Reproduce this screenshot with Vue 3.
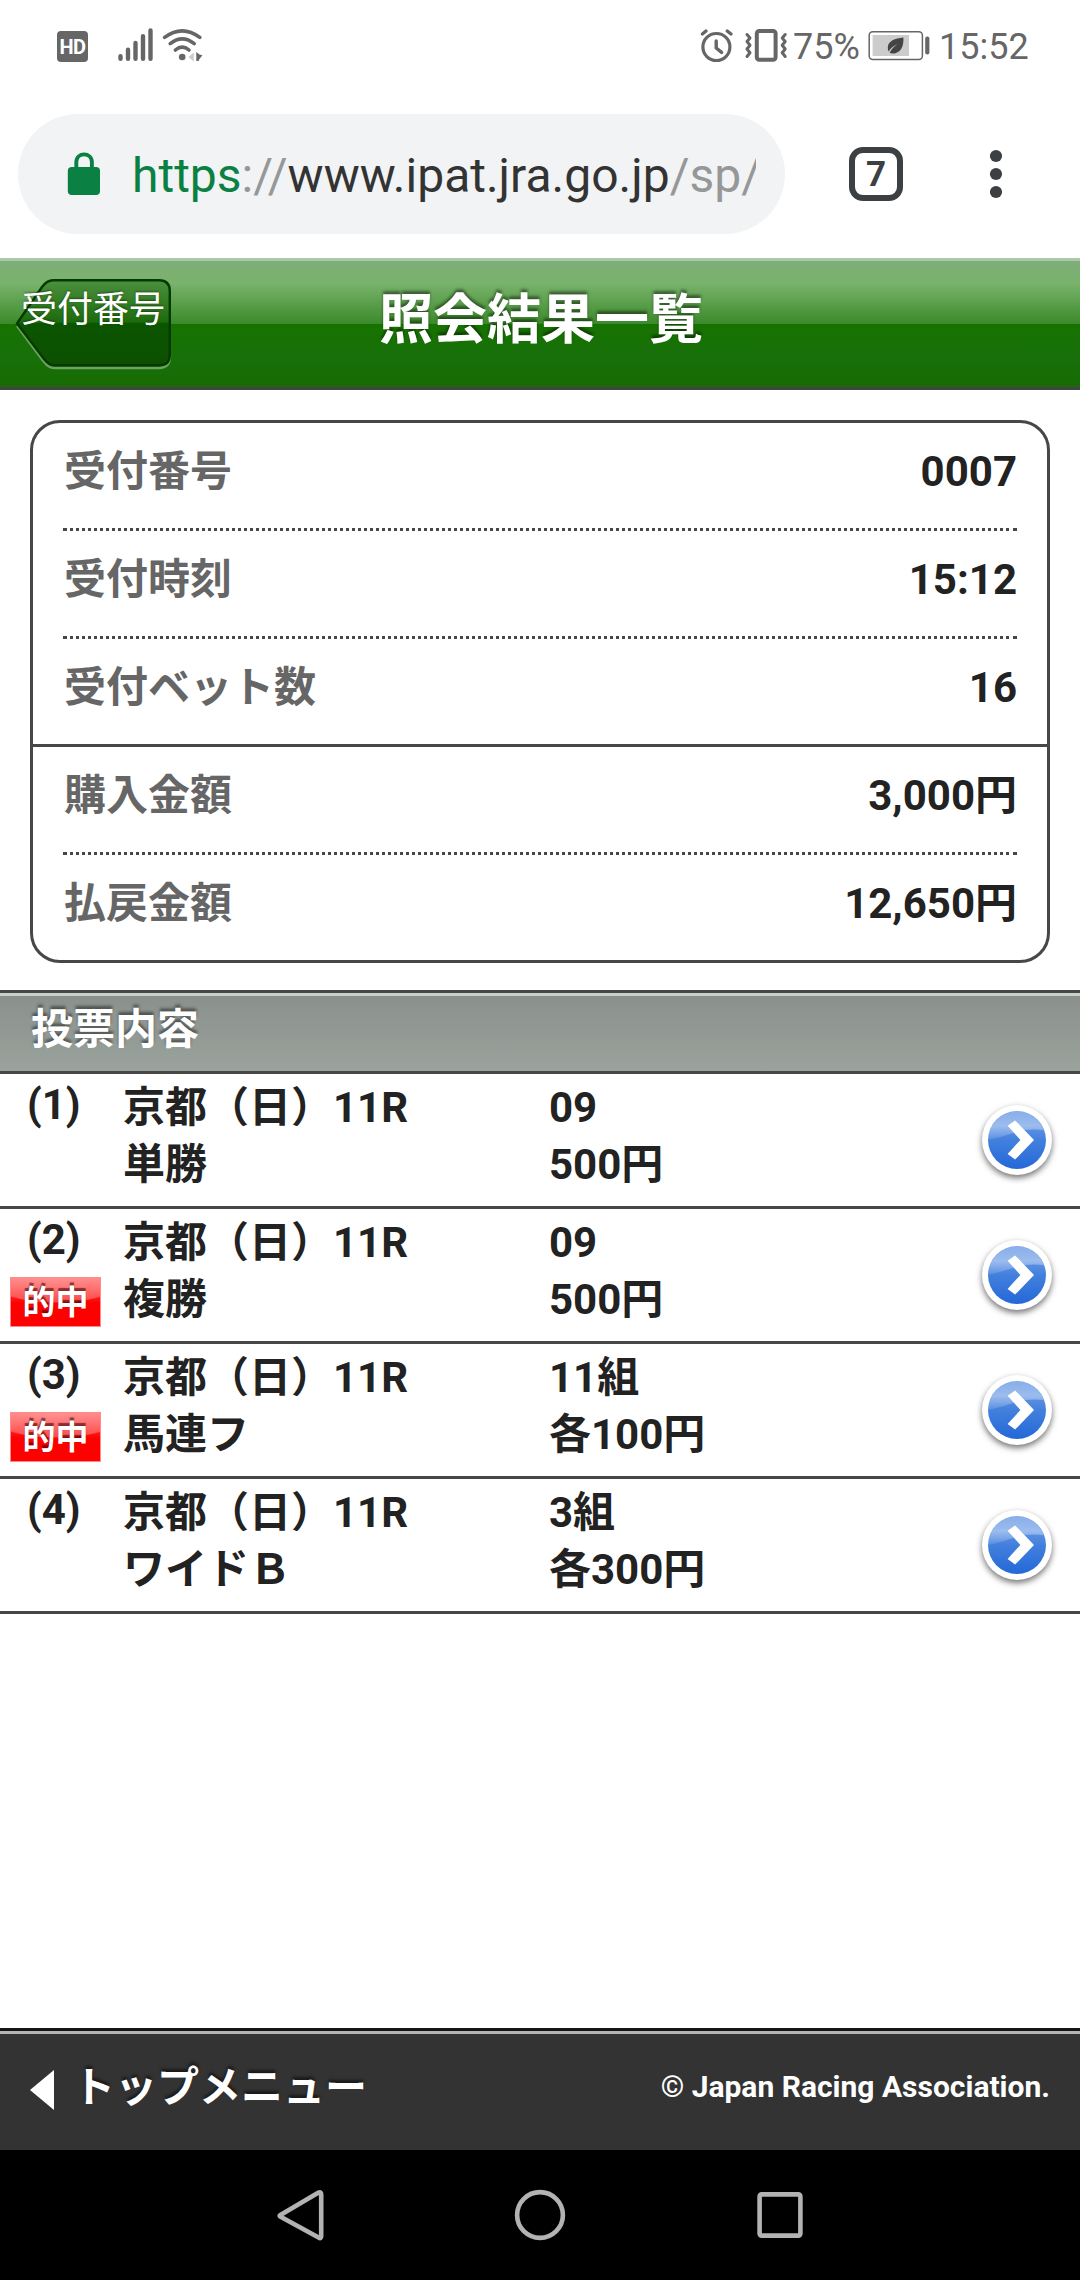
<script setup>
const summary = [
  { label: '受付番号', value: '0007', rule: 'dotted' },
  { label: '受付時刻', value: '15:12', rule: 'dotted' },
  { label: '受付ベット数', value: '16', rule: 'solid' },
  { label: '購入金額', value: '3,000円', rule: 'dotted' },
  { label: '払戻金額', value: '12,650円', rule: 'none' },
]

const bets = [
  { no: '(1)', race: '京都（日）11R', type: '単勝', pick: '09', stake: '500円', hit: false },
  { no: '(2)', race: '京都（日）11R', type: '複勝', pick: '09', stake: '500円', hit: true },
  { no: '(3)', race: '京都（日）11R', type: '馬連フ', pick: '11組', stake: '各100円', hit: true },
  { no: '(4)', race: '京都（日）11R', type: 'ワイドＢ', pick: '3組', stake: '各300円', hit: false },
]
</script>

<template>
  <div class="screen">
    <div class="status">
      <span class="hd">HD</span>
      <svg class="net" width="90" height="40" viewBox="116 26 90 40">
        <g stroke="#666" stroke-width="4.4" stroke-linecap="round" fill="none">
          <path d="M120.5 56.3V58.8M128 49.8V58.8M135.5 43V58.8M143 36.2V58.8M150.5 30.4V58.8" />
        </g>
        <g stroke="#666" stroke-width="3.6" stroke-linecap="round" fill="none">
          <path d="M164.6 37.4Q182.2 24.2 199.8 37.4" />
          <path d="M170.2 43.6Q182.2 34.2 194.2 43.6" />
          <path d="M175.4 50Q182.2 44.2 189 50" />
        </g>
        <circle cx="182.2" cy="57" r="3.3" fill="#666" />
        <path d="M193.8 52.5V61.5L188.4 57Z" fill="#ccc" />
        <path d="M196.3 52L199.4 54.4L202.4 55.2L199.3 59.2L198.6 61H196.3Z" fill="#666" />
      </svg>
      <svg class="alarm" width="90" height="40" viewBox="700 26 90 40">
        <g fill="none" stroke="#666" stroke-linecap="round" stroke-linejoin="round">
          <circle cx="716.4" cy="47" r="13.5" stroke-width="3.2" />
          <path d="M716.2 41V48L721.6 52.4" stroke-width="3.4" />
          <path d="M702.4 34L706 31M727.2 31L731 34" stroke-width="3.4" />
          <rect x="756.8" y="31" width="18.8" height="28.8" rx="2.5" stroke-width="4" />
          <path d="M747 34.5L750 38L747 41.5L750 45.3L747 49L750 52.7L747 56.5" stroke-width="3" />
          <path d="M785.2 34.5L782.2 38L785.2 41.5L782.2 45.3L785.2 49L782.2 52.7L785.2 56.5" stroke-width="3" />
        </g>
      </svg>
      <span class="pct">75%</span>
      <svg class="battery" width="64" height="32" viewBox="867 30 64 32">
        <rect x="869.2" y="31.8" width="53.2" height="27.8" rx="3.5" fill="none" stroke="#666" stroke-width="1.5" />
        <rect x="872.6" y="35" width="36.4" height="21" fill="#ccc" />
        <rect x="925.2" y="36.6" width="4.2" height="18" rx="2" fill="#666" />
        <path d="M903.4 37.6C895 38.4 888 41 887.8 47.6Q887.8 50 888.6 51.4Q892 46 897.6 44.2Q892 47.6 889.6 52.8Q892 53.8 895.4 53.2C901.4 51.6 903.8 46 903.4 37.6Z" fill="#444" />
      </svg>
      <span class="clock">15:52</span>
    </div>

    <div class="browser">
      <div class="omnibox">
        <svg class="lock" width="34" height="44" viewBox="67 151 34 44">
          <path d="M76.3 168V161.3C76.3 150.7 91.9 150.7 91.9 161.3V168" fill="none" stroke="#0b8043" stroke-width="3.9" />
          <rect x="67.8" y="166" width="32.2" height="28" rx="4" fill="#0b8043" />
        </svg>
        <div class="url"><span class="scheme">https</span><span class="dim">://</span>www.ipat.jra.go.jp<span class="dim">/sp/</span></div>
      </div>
      <div class="tabs">7</div>
      <svg class="more" width="14" height="50" viewBox="0 0 14 50">
        <g fill="#3c4043"><circle cx="7" cy="7" r="6.1" /><circle cx="7" cy="25" r="6.1" /><circle cx="7" cy="43" r="6.1" /></g>
      </svg>
    </div>

    <header class="bar">
      <div class="back">
        <svg class="back-shape" width="160" height="94" viewBox="14 277 160 94">
          <defs>
            <linearGradient id="backFill" x1="0" y1="0" x2="0" y2="1">
              <stop offset="0" stop-color="#4c903f" />
              <stop offset="0.49" stop-color="#1d6b0c" />
              <stop offset="0.51" stop-color="#0b5500" />
              <stop offset="1" stop-color="#0d4f02" />
            </linearGradient>
          </defs>
          <path d="M17 326L44 362Q49 368 54 368H159Q170 368 170 356" fill="none" stroke="#6aa45f" stroke-width="2.4" />
          <path d="M17 323.5L42 287Q47 280.3 53 280.3H159Q169.8 280.3 169.8 291V355Q169.8 365.3 159 365.3H54Q49 365.3 44 359Z" fill="url(#backFill)" stroke="#053a00" stroke-width="2.4" />
        </svg>
        <span class="back-text">受付番号</span>
      </div>
      <h1 class="title">照会結果一覧</h1>
    </header>

    <section class="summary">
      <div v-for="s in summary" :key="s.label" class="srow" :class="s.rule">
        <span class="slabel">{{ s.label }}</span>
        <span class="svalue">{{ s.value }}</span>
      </div>
    </section>

    <h2 class="section">投票内容</h2>

    <ul class="bets">
      <li v-for="b in bets" :key="b.no" class="bet">
        <div class="no">
          <span class="num">{{ b.no }}</span>
          <span v-if="b.hit" class="hit">的中</span>
        </div>
        <div class="col race"><span>{{ b.race }}</span><span>{{ b.type }}</span></div>
        <div class="col stake"><span>{{ b.pick }}</span><span>{{ b.stake }}</span></div>
        <svg class="go" width="90" height="90" viewBox="-45 -45 90 90">
          <defs>
            <linearGradient id="goFill" x1="0" y1="0" x2="0" y2="1">
              <stop offset="0" stop-color="#7fa8e8" />
              <stop offset="0.5" stop-color="#4380dd" />
              <stop offset="1" stop-color="#2468d8" />
            </linearGradient>
            <linearGradient id="goGloss" x1="0" y1="0" x2="0" y2="1">
              <stop offset="0" stop-color="#fff" stop-opacity="0.1" />
              <stop offset="0.5" stop-color="#fff" stop-opacity="0.38" />
              <stop offset="1" stop-color="#fff" stop-opacity="0.1" />
            </linearGradient>
          </defs>
          <circle class="disc" r="35" fill="#fff" />
          <circle r="29" fill="url(#goFill)" />
          <path d="M-29 0A29 29 0 0 1 27 -10Q8 -12 -7 -6Q-20 -2 -29 0Z" fill="url(#goGloss)" />
          <path d="M-9.4 -14.3L-1.9 -19.6L17 0L-1.9 19.6L-9.4 14L3.4 0Z" fill="#fff" />
        </svg>
      </li>
    </ul>

    <footer class="foot">
      <svg class="tri" width="26" height="42" viewBox="0 0 26 42"><path d="M1 21L25 1V41Z" fill="#fff" /></svg>
      <span class="top">トップメニュー</span>
      <span class="copy">© Japan Racing Association.</span>
    </footer>

    <nav class="nav">
      <svg width="52" height="54" viewBox="0 0 52 54"><path d="M6 27.2L44.6 4.6Q47.2 3.4 47.2 6.6V48Q47.2 51.2 44.6 49.6L6.6 28.8Q5 27.8 6 27.2Z" fill="none" stroke="#b3b3b3" stroke-width="4.6" stroke-linejoin="round" /></svg>
      <svg width="52" height="54" viewBox="0 0 52 54"><circle cx="26" cy="27" r="22.9" fill="none" stroke="#b3b3b3" stroke-width="4.6" /></svg>
      <svg width="52" height="54" viewBox="0 0 52 54"><rect x="5.6" y="6.4" width="40.8" height="41.2" rx="2" fill="none" stroke="#b3b3b3" stroke-width="4.6" /></svg>
    </nav>
  </div>
</template>

<style>
body {
  margin: 0;
  background: #fff;
}
</style>

<style scoped>
.screen {
  width: 1080px;
  height: 2280px;
  display: flex;
  flex-direction: column;
  overflow: hidden;
  background: #fff;
  color: #222;
  font-family: Roboto, "Noto Sans CJK JP", sans-serif;
}
.screen * {
  box-sizing: border-box;
}
.screen svg {
  display: block;
  flex: none;
}

.status {
  height: 92px;
  display: flex;
  align-items: center;
  padding-left: 57px;
  color: #666;
  font-size: 36px;
  line-height: 42px;
}
.hd {
  width: 31px;
  height: 31px;
  border-radius: 4px;
  background: #666;
  color: #fff;
  font-size: 20px;
  font-weight: 700;
  line-height: 32px;
  text-align: center;
  letter-spacing: -0.6px;
}
.net {
  margin-left: 28px;
}
.alarm {
  margin-left: 494px;
}
.pct {
  margin-left: 3px;
  width: 74px;
}
.battery {
  margin-right: 8px;
}
.pct,
.clock {
  padding-top: 1px;
}

.browser {
  height: 166px;
  display: flex;
  align-items: center;
  padding: 0 0 2px 18px;
}
.omnibox {
  width: 767px;
  height: 120px;
  border-radius: 60px;
  background: #f1f3f4;
  display: flex;
  align-items: center;
  padding: 0 29px 0 49px;
}
.url {
  margin-left: 31px;
  padding-top: 3px;
  flex: 1;
  overflow: hidden;
  white-space: nowrap;
  font-size: 48px;
  line-height: 60px;
  color: #333;
}
.scheme {
  color: #0b8043;
}
.dim {
  color: #969798;
}
.tabs {
  margin-left: 64px;
  width: 54px;
  height: 54px;
  border: 6px solid #3c4043;
  border-radius: 14px;
  color: #3c4043;
  font-size: 35px;
  font-weight: 700;
  line-height: 43px;
  text-align: center;
}
.more {
  margin-left: 86px;
}

.bar {
  height: 132px;
  border-top: 3px solid #abc9a8;
  border-bottom: 3px solid #3d4a3b;
  background: linear-gradient(#7fae79 0, #79b36c 22px, #3b8a2a 63px, #177300 63px, #17700a 95px, #176b03 124px, #315a2a 126px);
  display: flex;
  align-items: flex-start;
}
.back {
  width: 379px;
  height: 112px;
  padding: 16px 0 0 14px;
  display: grid;
  align-items: start;
}
.back-shape,
.back-text {
  grid-area: 1 / 1;
}
.back-text {
  padding-left: 7px;
  margin-top: 9px;
  color: #fff;
  font-size: 36px;
  line-height: 48px;
  text-shadow: 0 -1px 2px rgba(0, 0, 0, 0.4);
}
.title {
  margin: 25px 0 0;
  color: #fff;
  font-size: 54px;
  font-weight: 700;
  line-height: 70px;
  text-shadow: 0 -3px 3px rgba(0, 0, 0, 0.45);
}

.summary {
  margin: 30px 30px 27px;
  border: 3px solid #474747;
  border-radius: 30px;
  font-size: 42px;
  font-weight: 700;
  line-height: 57px;
}
.srow {
  height: 108px;
  margin: 0 30px;
  padding-top: 20px;
  display: flex;
  justify-content: space-between;
  border-bottom: 3px dotted #474747;
}
.srow.solid {
  margin: 0;
  padding: 20px 30px 0;
  border-bottom-style: solid;
}
.srow.none {
  height: 105px;
  border-bottom: 0;
}
.slabel {
  color: #666;
  padding-left: 1px;
}

.section {
  margin: 0;
  height: 84px;
  border-top: 3px solid #474747;
  border-bottom: 3px solid #474747;
  padding: 8px 0 0 31px;
  background: linear-gradient(#c9d1cd 3px, #8b908c 3px, #9aa39d 78px);
  color: #fff;
  font-size: 42px;
  font-weight: 700;
  line-height: 57px;
  text-shadow: 0 -3px 3px rgba(0, 0, 0, 0.45);
}

.bets {
  margin: 0;
  padding: 0;
  list-style: none;
  font-size: 42px;
  font-weight: 700;
  line-height: 57px;
}
.bet {
  height: 135px;
  border-bottom: 3px solid #474747;
  display: flex;
}
.no {
  width: 123px;
  padding-top: 2px;
  display: flex;
  flex-direction: column;
}
.num {
  padding-left: 27px;
}
.hit {
  margin: 9px 0 0 10px;
  width: 91px;
  height: 50px;
  border: 1px solid #ff8a8a;
  background: radial-gradient(ellipse 84px 25px at 45px 0, #ff6262 0, #ff4a4a 60%, #ff2a2a 96%, #fe0000 100%);
  background: linear-gradient(rgba(255, 190, 190, 0.55), rgba(255, 120, 120, 0) 25px), radial-gradient(ellipse 70px 25px at 45px 0, #ff5c5c 0, #ff4646 96%, #fe0000 100%);
  color: #fff;
  font-size: 33px;
  line-height: 50px;
  text-align: center;
  text-shadow: 0 -3px 1px rgba(60, 0, 0, 0.6);
}
.col {
  padding-top: 5px;
  display: flex;
  flex-direction: column;
}
.race {
  width: 426px;
}
.stake {
  width: 423px;
}
.go {
  margin-top: 21px;
}
.disc {
  filter: drop-shadow(0 3px 3px rgba(0, 0, 0, 0.55));
}

.foot {
  margin-top: auto;
  height: 122px;
  border-top: 3px solid #151515;
  padding: 0 30px 0 29px;
  background: linear-gradient(#b3b3b3 3px, #333 3px);
  display: flex;
  align-items: flex-start;
  color: #fff;
  font-weight: 700;
}
.tri {
  margin-top: 38px;
}
.top {
  margin-left: 18px;
  margin-top: 28px;
  font-size: 42px;
  line-height: 57px;
  text-shadow: 0 -3px 3px rgba(0, 0, 0, 0.5);
}
.copy {
  margin-left: auto;
  margin-top: 36px;
  font-size: 30px;
  line-height: 40px;
}

.nav {
  height: 130px;
  background: #000;
  display: flex;
  justify-content: center;
  align-items: center;
  gap: 188px;
}
</style>
